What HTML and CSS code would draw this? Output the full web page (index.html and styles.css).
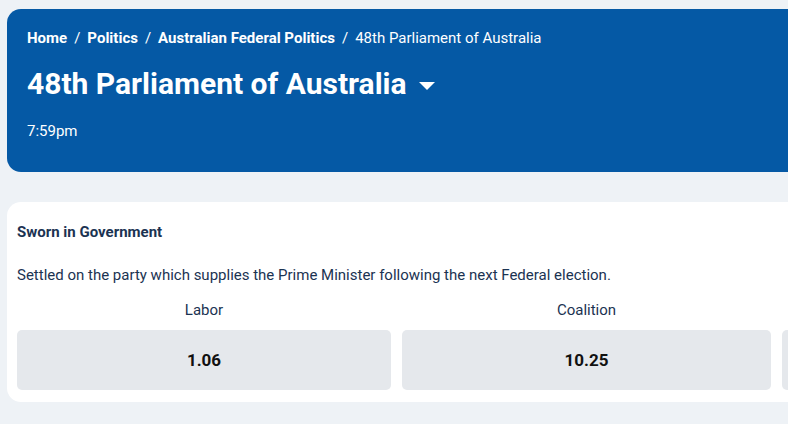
FILE: index.html
```html
<!DOCTYPE html>
<html>
<head>
<meta charset="utf-8">
<link rel="stylesheet" href="styles.css">
</head>
<body>
<div class="page">
  <header class="hero">
    <nav class="crumbs">
      <a class="crumb">Home</a><span class="sep">/</span>
      <a class="crumb">Politics</a><span class="sep">/</span>
      <a class="crumb">Australian Federal Politics</a><span class="sep">/</span>
      <span class="crumb current">48th Parliament of Australia</span>
    </nav>
    <h1 class="title">48th Parliament of Australia
      <svg class="caret" width="16" height="8" viewBox="0 0 16 8"><path d="M0 0H16L8 8Z" fill="#fff"/></svg>
    </h1>
    <div class="time">7:59pm</div>
  </header>
  <section class="card">
    <h2 class="market">Sworn in Government</h2>
    <p class="desc">Settled on the party which supplies the Prime Minister following the next Federal election.</p>
    <div class="odds">
      <div class="opt"><div class="name">Labor</div><button class="price">1.06</button></div>
      <div class="opt"><div class="name">Coalition</div><button class="price">10.25</button></div>
      <div class="opt"><div class="name">&nbsp;</div><button class="price"></button></div>
    </div>
  </section>
</div>
</body>
</html>
```
FILE: styles.css
```css
html, body {
  margin: 0;
  padding: 0;
  overflow: hidden;
  background: #eef2f6;
  font-family: Roboto, "Noto Sans", sans-serif;
}
.page {
  width: 1300px;
  padding: 9px 0 0 7px;
}
.hero {
  background: #0559a5;
  color: #fff;
  border-radius: 14px 0 0 14px;
  padding: 19px 20px 31px 20px;
}
.crumbs {
  font-size: 15px;
  line-height: 20px;
  display: flex;
  align-items: center;
}
.crumb {
  font-weight: 700;
  color: #fff;
}
.crumb.current {
  font-weight: 400;
}
.sep {
  margin: 0 7px;
  font-weight: 400;
}
.title {
  margin: 18px 0 0 0;
  font-size: 30px;
  line-height: 36px;
  font-weight: 700;
  display: flex;
  align-items: center;
}
.caret {
  margin-left: 12px;
  margin-top: 4px;
}
.time {
  margin-top: 19px;
  font-size: 15px;
  line-height: 20px;
}
.card {
  margin-top: 30px;
  background: #fff;
  border-radius: 14px 0 0 14px;
  padding: 20px 10px 12px 10px;
  color: #1b3352;
}
.market {
  margin: 0;
  font-size: 15px;
  line-height: 20px;
  font-weight: 700;
}
.desc {
  margin: 23px 0 0 0;
  font-size: 15px;
  line-height: 20px;
}
.odds {
  margin-top: 15px;
  display: grid;
  grid-template-columns: 374px 369px 369px;
  column-gap: 11px;
}
.name {
  text-align: center;
  font-size: 15px;
  line-height: 20px;
}
.price {
  display: block;
  width: 100%;
  margin-top: 10px;
  height: 60px;
  border: 0;
  border-radius: 5px;
  background: #e5e8ec;
  font-family: Roboto, "Noto Sans", sans-serif;
  font-size: 17px;
  font-weight: 700;
  color: #111;
}
```
